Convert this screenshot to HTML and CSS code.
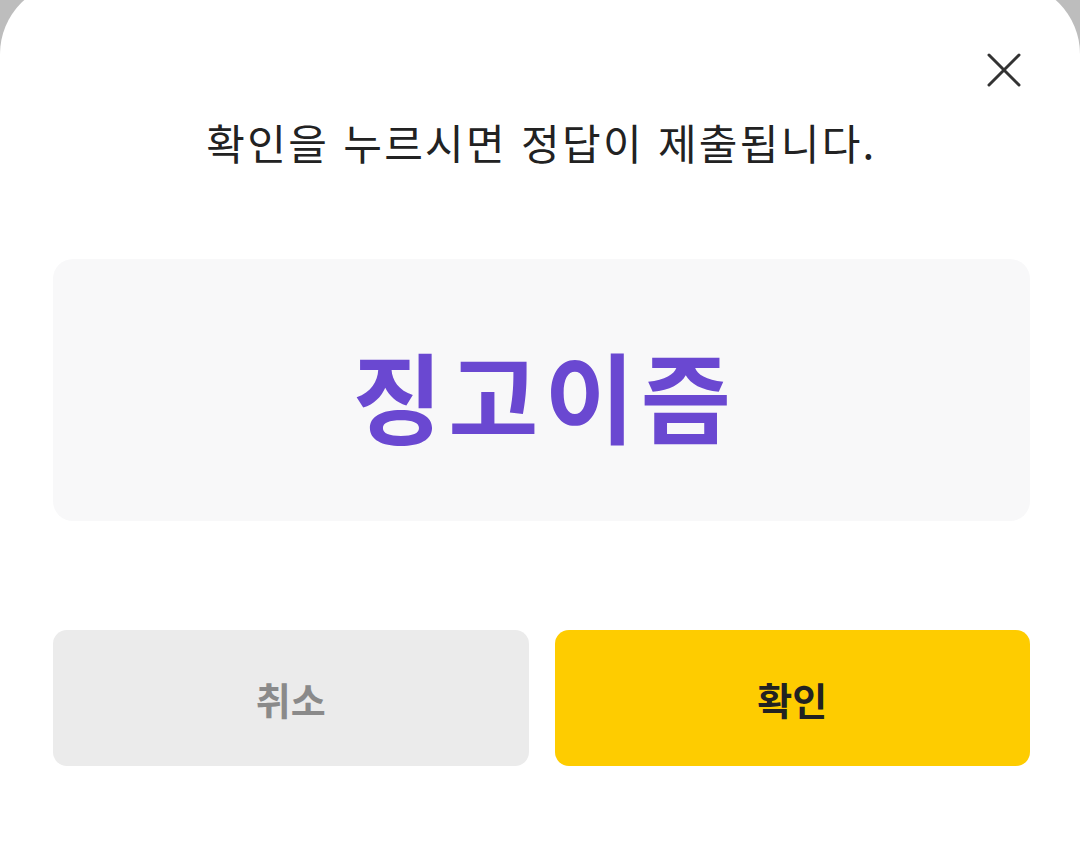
FILE: index.html
```html
<!DOCTYPE html>
<html lang="ko">
<head>
    <meta charset="UTF-8">
    <meta name="viewport" content="width=device-width, initial-scale=1.0">
    <title>정답 제출</title>
    <link rel="stylesheet" href="styles.css">
</head>
<body>

    <div class="sheet">
        <!-- 닫기 버튼 -->
        <button class="close-btn" aria-label="닫기">
            <svg width="34" height="34" viewBox="0 0 34 34">
                <path d="M2 2 L32 32 M32 2 L2 32" stroke="#333" stroke-width="3" stroke-linecap="round" fill="none" />
            </svg>
        </button>

        <p class="sheet-title">확인을 누르시면 정답이 제출됩니다.</p>

        <!-- 제출할 정답 -->
        <div class="answer-box">
            <span class="answer-text">징고이즘</span>
        </div>

        <div class="sheet-actions">
            <button class="btn btn-cancel">취소</button>
            <button class="btn btn-confirm">확인</button>
        </div>
    </div>

</body>
</html>
```

FILE: styles.css
```css
body {
    margin: 0;
    padding: 0;
    font-family: "Noto Sans CJK KR", "Noto Sans", sans-serif;
    background-color: #bdbdbd;
    overflow: hidden;
}

.sheet {
    position: relative;
    margin-top: -18px;
    padding: 18px 50px 0 53px;
    min-height: 100vh;
    background-color: #fff;
    border-radius: 72px 72px 0 0;
}

.close-btn {
    position: absolute;
    top: 64px;
    right: 52px;
    width: 48px;
    height: 48px;
    padding: 0;
    border: none;
    background: none;
    display: flex;
    align-items: center;
    justify-content: center;
    cursor: pointer;
}

.sheet-title {
    margin: 113px 0 0;
    font-size: 42px;
    line-height: 58px;
    letter-spacing: 2.3px;
    color: #222;
    text-align: center;
}

.answer-box {
    margin-top: 88px;
    height: 262px;
    padding-top: 6px;
    box-sizing: border-box;
    background-color: #f8f8f9;
    border-radius: 20px;
    display: flex;
    align-items: center;
    justify-content: center;
}

.answer-text {
    font-size: 98px;
    line-height: 98px;
    font-weight: 700;
    letter-spacing: 6px;
    margin-right: -6px;
    color: #6a48d1;
}

.sheet-actions {
    margin-top: 109px;
    display: grid;
    grid-template-columns: 1fr 1fr;
    gap: 26px;
}

.btn {
    height: 136px;
    border: none;
    border-radius: 14px;
    font-family: inherit;
    font-size: 38px;
    font-weight: 700;
    cursor: pointer;
}

.btn-cancel {
    background-color: #ebebeb;
    color: #8a8a8a;
}

.btn-confirm {
    background-color: #fecc00;
    color: #222;
}
```
